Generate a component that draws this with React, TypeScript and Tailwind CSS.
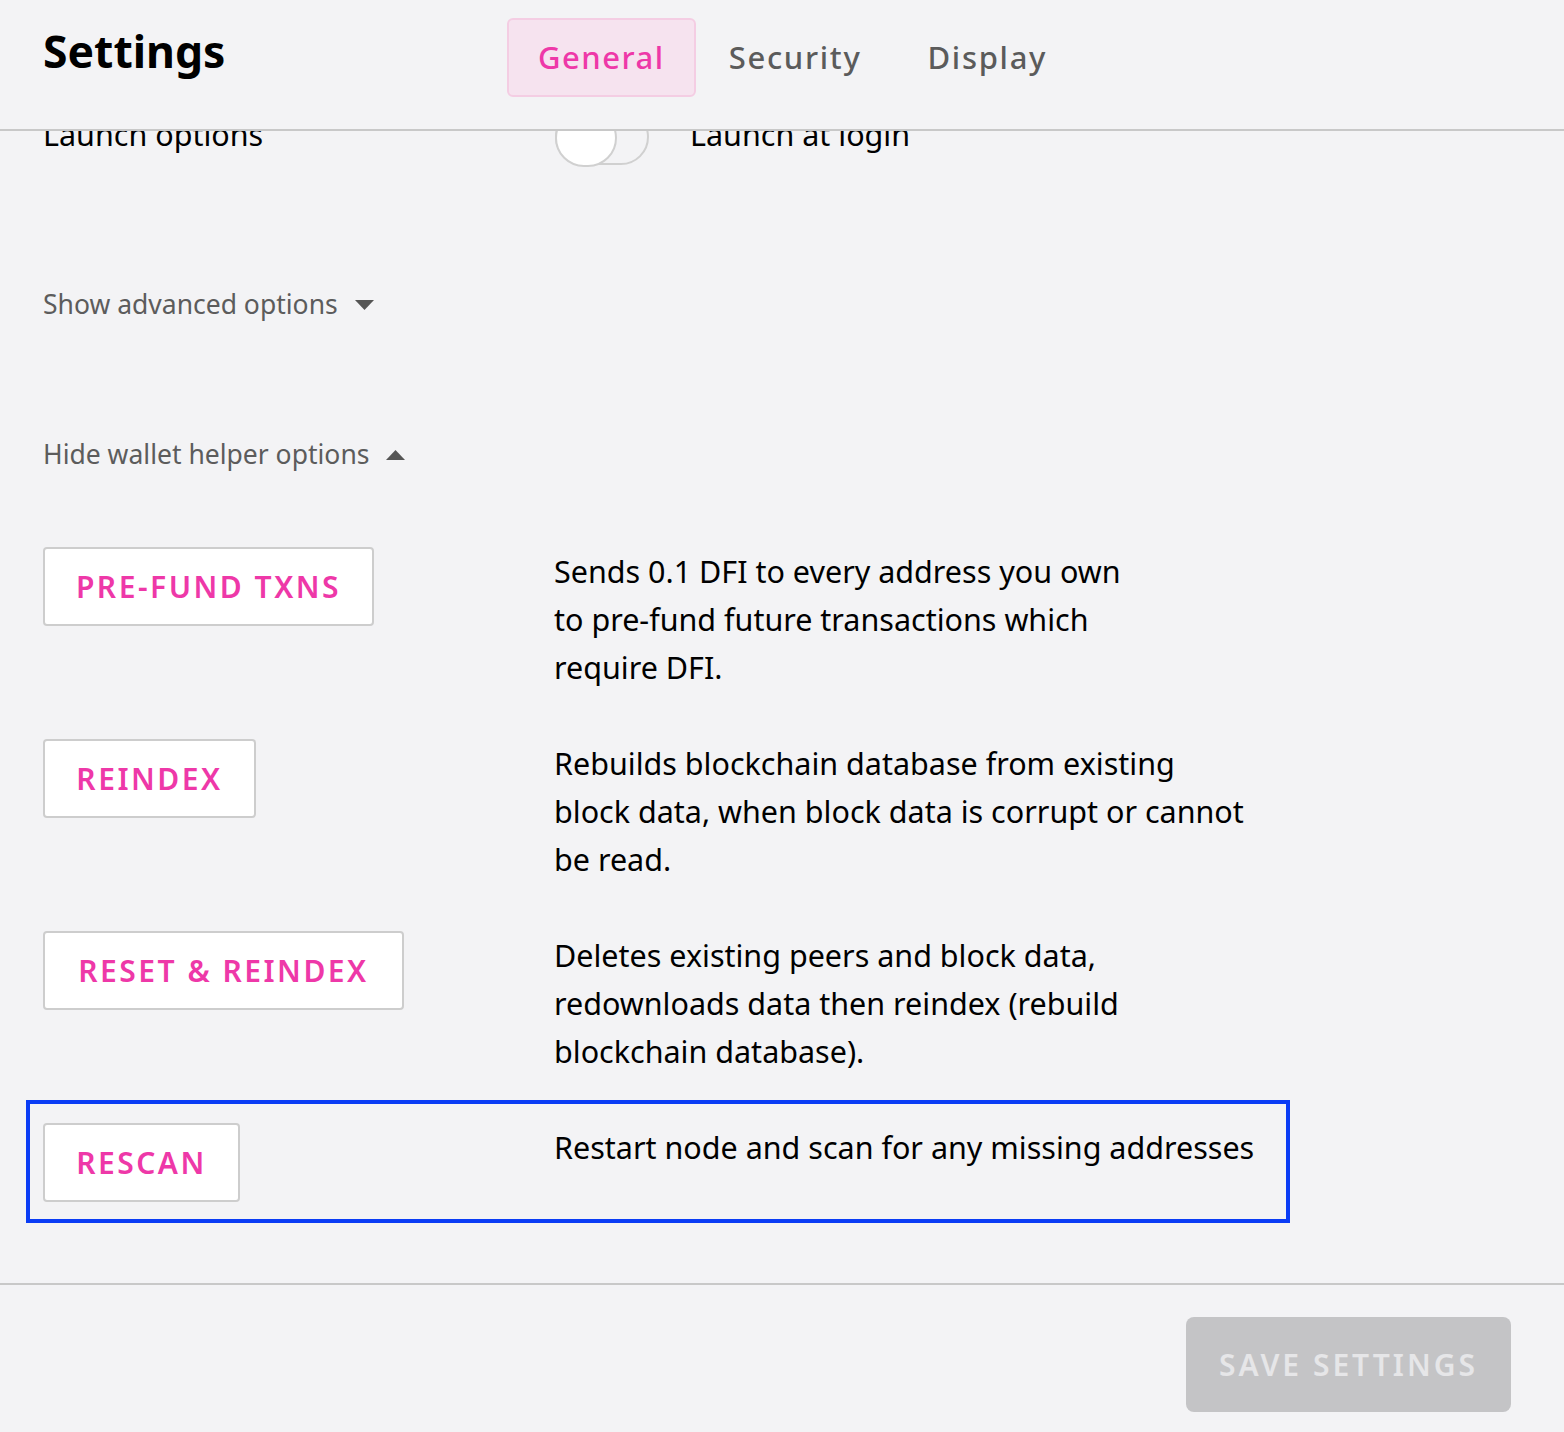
import React, { useState } from "react";

const tabs = ["General", "Security", "Display"];

const helpers = [
  {
    label: "PRE-FUND TXNS",
    width: "w-[331px]",
    lines: [
      "Sends 0.1 DFI to every address you own",
      "to pre-fund future transactions which",
      "require DFI.",
    ],
  },
  {
    label: "REINDEX",
    width: "w-[213px]",
    lines: [
      "Rebuilds blockchain database from existing",
      "block data, when block data is corrupt or cannot",
      "be read.",
    ],
  },
  {
    label: "RESET & REINDEX",
    width: "w-[361px]",
    lines: [
      "Deletes existing peers and block data,",
      "redownloads data then reindex (rebuild",
      "blockchain database).",
    ],
  },
];

const HelperButton = ({ label, width }: { label: string; width: string }) => (
  <button
    className={`${width} h-[79px] bg-white border-2 border-[#cdcdcd] rounded-[4px] text-[#ee38a8] text-[30px] font-semibold tracking-[2.5px]`}
  >
    {label}
  </button>
);

const Description = ({ lines }: { lines: string[] }) => (
  <p className="text-[30.5px] leading-[48px] text-black">
    {lines.map((l, i) => (
      <React.Fragment key={i}>
        {l}
        {i < lines.length - 1 && <br />}
      </React.Fragment>
    ))}
  </p>
);

const App = () => {
  const [activeTab, setActiveTab] = useState("General");
  const [launchAtLogin, setLaunchAtLogin] = useState(false);

  return (
    <div className="w-[1564px] h-[1432px] bg-[#f3f3f5] flex flex-col font-['Noto_Sans',sans-serif] overflow-hidden">
      {/* шапка */}
      <header className="h-[131px] shrink-0 border-b-2 border-[#c8c8c8] flex items-start px-[43px]">
        <h1 className="mt-[21px] text-[44.5px] leading-[60px] font-bold text-black w-[464px]">
          Settings
        </h1>
        <nav className="flex mt-[18px]">
          {tabs.map((t) => (
            <button
              key={t}
              onClick={() => setActiveTab(t)}
              className={
                t === activeTab
                  ? "h-[79px] px-[29px] rounded-[6px] border-2 border-[#f4cde3] bg-[#f6e3ef] text-[#ee38a8] text-[31px] font-medium tracking-[1.5px]"
                  : "h-[79px] px-[31px] rounded-[6px] border-2 border-transparent text-[#5b5b5b] text-[31px] font-medium tracking-[1.7px]"
              }
            >
              {t}
            </button>
          ))}
        </nav>
      </header>

      {/* содержимое, прокручено */}
      <main className="flex-1 overflow-hidden px-[43px]">
        <div className="-mt-[26px]">
          <div className="h-[60px] flex items-center">
            <span className="w-[512px] text-[30.5px] text-black">Launch options</span>
            <button
              onClick={() => setLaunchAtLogin(!launchAtLogin)}
              className="relative mt-[4px] w-[94px] h-[56px] rounded-full border-2 border-[#d0d0d0] bg-[#f3f3f5]"
            >
              <span className="absolute -left-[2px] -top-[2px] w-[62px] h-[58px] rounded-full bg-white border-2 border-[#d0d0d0]" />
            </button>
            <span className="ml-[41px] text-[30.5px] text-black">Launch at login</span>
          </div>

          <button className="mt-[120px] h-[40px] flex items-center gap-[17px] text-[26.5px] text-[#5c5c5c]">
            Show advanced options
            <svg width="19" height="10" viewBox="0 0 19 10">
              <path d="M0 0 L19 0 L9.5 10 Z" fill="#555" />
            </svg>
          </button>

          <button className="mt-[110px] h-[40px] flex items-center gap-[17px] text-[26.5px] text-[#5c5c5c]">
            Hide wallet helper options
            <svg width="19" height="10" viewBox="0 0 19 10">
              <path d="M0 10 L19 10 L9.5 0 Z" fill="#555" />
            </svg>
          </button>

          <div className="mt-[72px] flex flex-col gap-[48px] w-[1230px]">
            {helpers.map((h) => (
              <div key={h.label} className="grid grid-cols-[511px_1fr] items-start">
                <div>
                  <HelperButton label={h.label} width={h.width} />
                </div>
                <Description lines={h.lines} />
              </div>
            ))}

            <div className="-mx-[17px] -mt-[23px] w-[1264px] border-4 border-[#0a3cf5] px-[13px] pt-[19px] pb-[17px] grid grid-cols-[511px_1fr] items-start">
              <div>
                <HelperButton label="RESCAN" width="w-[197px]" />
              </div>
              <Description lines={["Restart node and scan for any missing addresses"]} />
            </div>
          </div>
        </div>
      </main>

      {/* подвал */}
      <footer className="h-[149px] shrink-0 border-t-2 border-[#c8c8c8] flex justify-end items-start pt-[32px] pr-[53px]">
        <button
          disabled
          className="w-[325px] h-[95px] rounded-[8px] bg-[#c4c4c6] text-[#e6e6e8] text-[30px] font-semibold tracking-[3px]"
        >
          SAVE SETTINGS
        </button>
      </footer>
    </div>
  );
};

export default App;
